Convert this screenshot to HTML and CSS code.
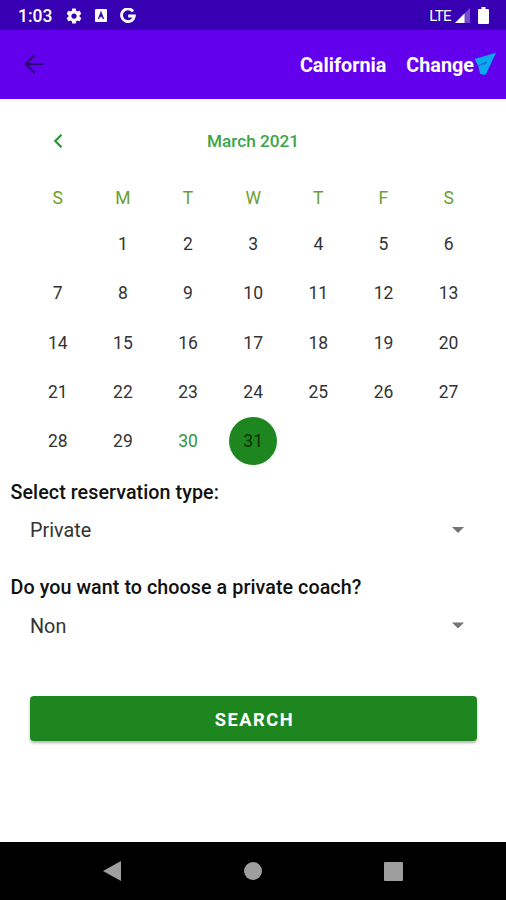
FILE: index.html
```html
<!DOCTYPE html>
<html lang="en">
<head>
<meta charset="utf-8">
<meta name="viewport" content="width=device-width, initial-scale=1">
<title>Reservation</title>
<link rel="stylesheet" href="styles.css">
</head>
<body>
<div class="screen">
  <div class="status">
    <span class="clock">1:03</span>
    <svg class="gear" width="18" height="18" viewBox="0 0 24 24"><path fill="currentColor" fill-rule="evenodd" d="M19.4 13a7.800 7.800 0 0 0 0-2l2.100-1.650a.5.5 0 0 0 .12-.64l-2-3.460a.5.5 0 0 0-.61-.22l-2.490 1a7.300 7.300 0 0 0-1.690-.98l-.38-2.650A.49.49 0 0 0 14 2h-4a.49.49 0 0 0-.49.42l-.38 2.650a7.700 7.700 0 0 0-1.690.98l-2.490-1a.5.5 0 0 0-.61.22l-2 3.460a.49.49 0 0 0 .12.64L4.570 11a7.900 7.900 0 0 0 0 2l-2.110 1.650a.5.5 0 0 0-.12.64l2 3.460c.12.220.39.300.61.220l2.490-1c.52.400 1.080.730 1.690.980l.38 2.650c.03.240.240.420.490.420h4c.25 0 .46-.18.49-.42l.38-2.650a7.700 7.700 0 0 0 1.690-.98l2.490 1c.23.090.490 0 .61-.22l2-3.460a.5.5 0 0 0-.12-.64zM12 15.500a3.500 3.500 0 1 1 0-7 3.500 3.500 0 0 1 0 7z"/></svg>
    <svg class="abox" width="12" height="13" viewBox="0 0 12 13"><rect width="12" height="13" rx="1" fill="#fff"/><path d="M3.500 10 6 3.500 8.500 10M6 6v2.500" fill="none" stroke="#3700b3" stroke-width="1.300"/></svg>
    <svg class="glogo" width="16" height="16" viewBox="0 0 16 16"><path d="M13 3.300A6.400 6.400 0 1 0 14.300 8H8.200" fill="none" stroke="#fff" stroke-width="2.800"/></svg>
    <span class="lte">LTE</span>
    <svg class="signal" width="15" height="15" viewBox="0 0 15 15"><path d="M15 0v15H0z" fill="#fff" opacity=".3"/><path d="M9.500 5.500V15H0z" fill="#fff"/></svg>
    <svg class="battery" width="11" height="17" viewBox="0 0 11 17"><path d="M3.500 0h4v2H10q1 0 1 1v13q0 1-1 1H1q-1 0-1-1V3q0-1 1-1h2.500z" fill="#fff"/></svg>
  </div>
  <header class="appbar">
    <svg class="back" width="20" height="20" viewBox="0 0 20 20"><path d="M19.500 10H2M10.500 1.200 1.700 10l8.800 8.800" fill="none" stroke="currentColor" stroke-width="2.200"/></svg>
    <span class="place">California</span>
    <span class="change">Change</span>
    <svg class="plane" width="23" height="24" viewBox="0 0 23 24"><path d="M22 .8.500 7.100l3.800 7 1.700 7.700 4.500 1.200q1 0 1.600-1.100z" fill="#08a9ee"/><path d="m12.500 10-8 3.800M12.200 10.700l-2.500 2.500" fill="none" stroke="#235bd8" stroke-width="1"/></svg>
  </header>
  <main>
    <div class="month">
      <svg class="prev" width="10" height="16" viewBox="0 0 10 16"><path d="M8.500 1.800 2.300 8l6.200 6.200" fill="none" stroke="currentColor" stroke-width="2.200"/></svg>
      <span>March 2021</span>
    </div>
    <div class="weekdays"><span>S</span><span>M</span><span>T</span><span>W</span><span>T</span><span>F</span><span>S</span></div>
    <div class="days">
      <span></span><span>1</span><span>2</span><span>3</span><span>4</span><span>5</span><span>6</span>
      <span>7</span><span>8</span><span>9</span><span>10</span><span>11</span><span>12</span><span>13</span>
      <span>14</span><span>15</span><span>16</span><span>17</span><span>18</span><span>19</span><span>20</span>
      <span>21</span><span>22</span><span>23</span><span>24</span><span>25</span><span>26</span><span>27</span>
      <span>28</span><span>29</span><span class="today">30</span><span><b class="selected">31</b></span>
    </div>
    <div class="label label-type">Select reservation type:</div>
    <div class="spinner"><span class="private">Private</span><i class="caret"></i></div>
    <div class="label label-coach">Do you want to choose a private coach?</div>
    <div class="spinner"><span class="non">Non</span><i class="caret"></i></div>
    <button class="search" type="button">SEARCH</button>
  </main>
  <nav class="navbar">
    <svg width="18" height="20" viewBox="0 0 18 20"><path d="M18 0v20L0 10z" fill="currentColor"/></svg>
    <svg width="18" height="18" viewBox="0 0 18 18"><circle cx="9" cy="9" r="9" fill="currentColor"/></svg>
    <svg width="19" height="19" viewBox="0 0 19 19"><rect width="19" height="19" rx="1" fill="currentColor"/></svg>
  </nav>
</div>
</body>
</html>
```

FILE: styles.css
```css
* { box-sizing: border-box; }
body { margin: 0; background: #fff; font-family: Roboto, sans-serif; }
svg { display: block; flex: none; }
.screen { width: 506px; height: 900px; display: flex; flex-direction: column; overflow: hidden; }
.status { height: 30px; flex: none; background: #3700b3; color: #fff; display: flex; align-items: center; padding: 1px 17px 0 18px; }
.clock { width: 47px; font-size: 17.5px; font-weight: 500; }
.gear { margin-right: 12px; }
.glogo { margin-left: 13px; }
.lte { margin-left: auto; font-size: 15px; letter-spacing: -0.6px; }
.signal { margin-left: 4px; }
.battery { margin-left: 8px; }
.appbar { height: 69px; flex: none; background: #6200ee; color: #fff; display: flex; align-items: center; padding: 0 9px 0 24px; font-size: 19.8px; line-height: 24px; font-weight: 700; }
.back { color: #2b0870; margin-top: -1px; }
.place { margin-left: auto; margin-right: 20px; padding-top: 3px; }
.change { padding-top: 3px; }
.plane { margin-left: 0; margin-top: -1px; }
main { flex: 1; display: flex; flex-direction: column; }
.month { height: 84px; position: relative; display: flex; justify-content: center; align-items: center; color: #3da447; font-size: 17.2px; font-weight: 500; }
.prev { position: absolute; left: 53px; top: 34px; color: #25972f; }
.weekdays, .days { display: grid; grid-template-columns: repeat(7, 65.15px); padding-left: 25.2px; text-align: center; font-size: 17.5px; }
.weekdays { height: 36.7px; line-height: 30px; color: #6b9e2e; }
.days { grid-auto-rows: 49.2px; color: #333; }
.days > span { display: flex; align-items: center; justify-content: center; }
.days > .today { color: #35953b; }
.selected { width: 48px; height: 48px; border-radius: 50%; background: #1e861e; color: #0b310b; display: flex; align-items: center; justify-content: center; font-weight: 400; }
.label { margin-left: 10.5px; font-size: 19.7px; font-weight: 500; letter-spacing: 0.07px; color: #111; line-height: 24px; white-space: nowrap; }
.label-type { margin-top: 15.3px; }
.label-coach { margin-top: 21.5px; }
.spinner { height: 50px; padding: 0 42px 0 30px; display: flex; align-items: center; justify-content: space-between; font-size: 19.8px; line-height: 24px; color: #333; }
.private, .non { padding-top: 3px; }
.caret { width: 12px; height: 6px; background: #757575; clip-path: polygon(0 0, 100% 0, 50% 100%); }
.search { margin: 45.5px 29px 0 30px; height: 45px; border: 0; border-radius: 4px; background: #1e861e; color: #fff; font: 700 18.3px/1.2 Roboto, sans-serif; letter-spacing: 1.5px; padding: 3px 0 0 2px; box-shadow: 0 2px 3px rgba(0, 0, 0, .3); }
.navbar { height: 58px; flex: none; background: #000; color: #9e9e9e; display: flex; align-items: center; justify-content: space-between; padding: 0 103px; }
```
